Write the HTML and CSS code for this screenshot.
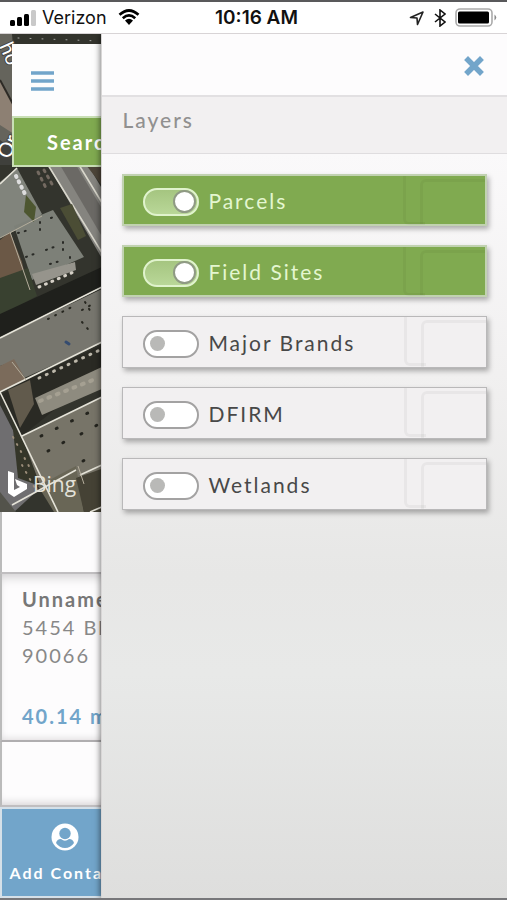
FILE: index.html
```html
<!DOCTYPE html>
<html lang="en">
  <head>
    <meta charset="utf-8" />
    <meta name="viewport" content="width=device-width, initial-scale=1" />
    <title>Layers</title>
    <link rel="stylesheet" href="styles.css">
  </head>
  <body>
    <div class="status">
      <div class="status-left">
        <svg width="28" height="18" viewBox="0 0 28 18">
          <rect x="0" y="11" width="5" height="6" rx="1.5" />
          <rect x="7" y="8" width="5" height="9" rx="1.5" />
          <rect x="14" y="5" width="5" height="12" rx="1.5" />
          <rect x="21" y="1" width="5" height="16" rx="1.5" fill="#c9c9c9" />
        </svg>
        <span class="carrier">Verizon</span>
        <svg class="wifi" width="22" height="17" viewBox="0 0 22 17">
          <path d="M1.5 5.8Q11-2.8 20.5 5.8M4.8 9.2Q11 3.7 17.2 9.2" fill="none" stroke="#000" stroke-width="2.7" />
          <path d="M7 11.5Q11 8.2 15 11.5L11 16Z" />
        </svg>
      </div>
      <span class="time">10:16 AM</span>
      <div class="status-right">
        <svg width="16" height="16" viewBox="0 0 16 16">
          <path d="M1.5 7.5L14 2L8.5 14.5L8 8Z" fill="none" stroke="#222" stroke-width="1.6" stroke-linejoin="round" />
        </svg>
        <svg width="12" height="18" viewBox="0 0 12 18">
          <path d="M1 5L11 13L6 17V1L11 5L1 13" fill="none" stroke="#111" stroke-width="1.6" />
        </svg>
        <svg width="42" height="20" viewBox="0 0 42 20">
          <rect x="1" y="1" width="36" height="17" rx="4" fill="#fff" stroke="#aaa" stroke-width="1.6" />
          <rect x="3" y="3.500" width="31" height="12" rx="1.5" />
          <path d="M39.500 6.500Q43 9.500 39.500 12.500Z" fill="#888" />
        </svg>
      </div>
    </div>

    <div class="stage">
      <main class="page">
        <section class="map">
          <svg class="aerial" viewBox="0 34 507 478" preserveAspectRatio="xMinYMin slice">
            <rect y="34" width="507" height="478" fill="#33342d" />
            <!-- streets -->
            <path d="M0 34H12L14 60V165H0Z" fill="#65645c" />
            <path d="M0 80L14 105V134L0 125Z" fill="#8d8073" />
            <path d="M0 140L14 150V165H0Z" fill="#3f403c" />
            <path d="M0 80L14 106" stroke="#2d2a25" stroke-width="2" />
            <path d="M48 165H88L104 192V262Z" fill="#85847f" />
            <path d="M60 165H76L104 212V240Z" fill="#6b6965" />
            <path d="M86 165H104V188Z" fill="#4d4539" />
            <path d="M48 165L104 256M79 165L104 206" stroke="#d8d6cb" stroke-width="1.6" />
            <!-- roofs -->
            <path d="M0 182L17 168L42 214L33 222L0 238Z" fill="#81847c" />
            <path d="M14 226L53 210L84 257L32 280Z" fill="#7d8078" />
            <path d="M0 240L10 232L22 262L28 290L0 286Z" fill="#6b5846" />
            <path d="M26 195L36 207L34 222L24 212Z" fill="#4d5630" />
            <path d="M60 208L72 204L86 236L78 240Z" fill="#4b4d35" />
            <path d="M0 278L28 268L37 296L0 316Z" fill="#394130" />
            <path d="M0 314L104 266V288L0 338Z" fill="#1f201c" />
            <path d="M32 274L75 262L76 270L36 285Z" fill="#96948c" />
            <path d="M0 338L104 288V342L24 378L12 362L0 366Z" fill="#77766e" />
            <path d="M0 366L14 359L26 380L0 391Z" fill="#7b6b5b" />
            <path d="M27 380L104 344V370L22 436L2 394Z" fill="#2a2a24" />
            <path d="M8 390L30 380L34 404L20 428Z" fill="#615a4c" />
            <path d="M35 398L104 366V388L42 415Z" fill="#8e8b7f" />
            <path d="M22 436L104 396V472L76 478L40 485Z" fill="#777468" />
            <path d="M0 405L18 440L38 490L14 512H0Z" fill="#6f6e70" />
            <path d="M12 420L24 444L40 486L18 478Z" fill="#353629" />
            <path d="M38 486L76 466L84 512H54Z" fill="#696656" />
            <path d="M76 478L104 468V512H84Z" fill="#454235" />
            <path d="M0 492L16 512H0Z" fill="#53534b" />
            <!-- parcel lines -->
            <path d="M0 184L17 168M0 338L104 286M0 392L104 341M22 436L104 396M0 392L58 512M12 505L76 470M80 475L104 464M90 512L104 506" fill="none" stroke="#e5e3d8" stroke-width="1.6" />
            <path d="M12 362L26 380M0 238L42 216M10 232L30 290M78 466L84 484" fill="none" stroke="#b4ad9c" />
            <!-- parked cars, vents and trees -->
            <g fill="none" stroke-linecap="round">
              <path d="M16 176L26 196" stroke="#ddd" stroke-width="4" stroke-dasharray="1 5" />
              <path d="M38 172L46 188M44 170L52 184" stroke="#746a61" stroke-width="3" stroke-dasharray="2 5" />
              <path d="M39 287L76 271" stroke="#d5d0c7" stroke-width="3" stroke-dasharray="1 6" />
              <path d="M39 378L100 350" stroke="#bcb7aa" stroke-width="3" stroke-dasharray="1 7" />
              <path d="M18 233L29 230M40 222V230M51 218L55 216M26 257L34 254M63 242V250M46 250L54 247M50 264L60 261M70 257V258" stroke="#292a26" stroke-width="2" stroke-dasharray="1 6" />
              <path d="M48 319L72 307M82 310L91 305M82 322L92 334M85 302L92 314" stroke="#26261f" stroke-width="2" stroke-dasharray="1 7" />
              <path d="M41 436L96 409M48 451L66 441M81 434L99 424M83 461L95 454" stroke="#24241e" stroke-width="3" stroke-dasharray="1 16" />
              <path d="M66 342L69 344" stroke="#354c70" stroke-width="3" />
              <path d="M13 437L30 468M22 465L36 490" stroke="#9a8c78" stroke-width="2" stroke-dasharray="1 7" />
              <path d="M40 401L98 378" stroke="#a5a092" stroke-width="4" stroke-dasharray="2 7" />
              <path d="M18 38L100 41" stroke="#a6a7a3" stroke-width="1" stroke-dasharray="1 11" />
            </g>
            <g class="street">
              <text transform="translate(-1 46) rotate(66)">ho</text>
              <text transform="translate(9 160) rotate(-64)">Or</text>
            </g>
          </svg>
          <div class="search">
            <div class="search-top">
              <button class="menu" aria-label="Menu">
                <svg width="23" height="20" viewBox="0 0 23 20">
                  <path d="M0 2H23M0 10H23M0 18H23" stroke="#72a5ca" stroke-width="3.500" />
                </svg>
              </button>
            </div>
            <button class="search-button">Search</button>
          </div>
          <div class="bing">
            <svg width="19" height="26" viewBox="0 0 19 26">
              <path d="M0 0L6 2V19L12 16L9 14L7 8L19 13V18L6 26L0 22Z" fill="#fff" />
            </svg>
            <span>Bing</span>
          </div>
        </section>
        <div class="strip"></div>
        <article class="site">
          <strong>Unnamed</strong>
          <span>5454 Bl</span>
          <span>90066</span>
          <b class="distance">40.14 m</b>
        </article>
        <div class="strip strip-bottom"></div>
        <nav class="actions">
          <button class="action">
            <svg width="28" height="28" viewBox="0 0 28 28">
              <circle cx="14" cy="14" r="13.500" fill="#fff" />
              <circle cx="14" cy="10.500" r="5.700" fill="#72a5ca" />
              <path d="M5 20Q6 16 10 16Q14 19.500 18 16Q22 16 23 20Q19.500 25 14 25Q8.500 25 5 20Z" fill="#72a5ca" />
            </svg>
            Add Contact
          </button>
        </nav>
      </main>

      <aside class="drawer">
        <div class="drawer-top">
          <button class="close" aria-label="Close">
            <svg width="20" height="20" viewBox="0 0 20 20">
              <path d="M4 4L16 16M16 4L4 16" stroke="#72a5ca" stroke-width="5.500" stroke-linecap="square" stroke-linejoin="round" />
            </svg>
          </button>
        </div>
        <h2 class="drawer-title">Layers</h2>
        <div class="layers">
          <label class="layer active"><input type="checkbox" class="toggle" checked />Parcels</label>
          <label class="layer active"><input type="checkbox" class="toggle" checked />Field Sites</label>
          <label class="layer"><input type="checkbox" class="toggle" />Major Brands</label>
          <label class="layer"><input type="checkbox" class="toggle" />DFIRM</label>
          <label class="layer"><input type="checkbox" class="toggle" />Wetlands</label>
        </div>
      </aside>
    </div>
  </body>
</html>
```
FILE: styles.css
```css
* {
  box-sizing: border-box;
}
html,
body {
  margin: 0;
  padding: 0;
}
body {
  min-height: 100vh;
  display: flex;
  flex-direction: column;
  border-bottom: 2px solid #77777a;
  font-family: Lato, "Liberation Sans", sans-serif;
  font-size: 21px;
  letter-spacing: 2px;
  color: #888;
}
button {
  font: inherit;
  letter-spacing: inherit;
  border: 0;
  padding: 0;
  background: none;
  cursor: pointer;
}
svg {
  display: block;
  flex-shrink: 0;
}

/* phone status bar */
.status {
  height: 34px;
  padding: 0 10px;
  border-top: 2px solid #59595b;
  border-bottom: 1px solid #d8d4d6;
  background: #fff;
  color: #111;
  display: grid;
  grid-template-columns: 1fr auto 1fr;
  align-items: center;
  font-family: Inter, sans-serif;
  font-size: 18px;
  letter-spacing: 0;
}
.status-left,
.status-right {
  display: flex;
  align-items: center;
}
.carrier {
  margin: 0 11px 0 4px;
}
.time {
  padding-left: 6px;
  font-size: 19px;
  font-weight: 600;
}
.status-right {
  justify-content: flex-end;
  gap: 9px;
}

.stage {
  flex: 1;
  display: flex;
  position: relative;
  overflow: hidden;
}
.page {
  flex: 1;
  display: flex;
  flex-direction: column;
  background: #fdfcfd;
}

/* map */
.map {
  flex: 1;
  position: relative;
  padding: 10px 12px;
  display: flex;
  flex-direction: column;
  justify-content: space-between;
  overflow: hidden;
}
.aerial {
  position: absolute;
  top: 0;
  left: 0;
  width: 100%;
  height: 100%;
}
.street {
  fill: #fff;
  stroke: #444;
  stroke-width: 2px;
  paint-order: stroke;
  font-size: 20px;
  letter-spacing: 0;
}
.search {
  position: relative;
}
.search-top {
  height: 72px;
  padding: 26px 19px;
  background: #fdfdfd;
}
.search-button {
  width: 100%;
  height: 51px;
  padding-left: 33px;
  border: 2px solid #c9dfb6;
  background: #80aa50;
  color: #fff;
  font-size: 20px;
  font-weight: 700;
  text-align: left;
}
.bing {
  position: relative;
  display: flex;
  align-items: center;
  gap: 6px;
  margin-left: -4px;
  padding-bottom: 4px;
  color: #e4e2da;
  font-family: "Open Sans", sans-serif;
  letter-spacing: 0;
}

/* selected site */
.strip {
  height: 62px;
  border-left: 2px solid #bbb;
  border-bottom: 2px solid #c0bec0;
}
.strip-bottom {
  height: 65px;
  box-shadow: inset 0 -8px 8px -6px #d5d2d4;
}
.site {
  height: 168px;
  padding: 11px 20px;
  border-left: 2px solid #bbb;
  border-bottom: 2px solid #b0aeb0;
  box-shadow: inset 0 8px 12px -6px #c8c6c8, inset 0 -6px 8px -6px #d5d2d4;
  font-size: 20px;
  line-height: 28px;
  display: flex;
  flex-direction: column;
}
.site strong {
  color: #777;
}
.distance {
  margin-top: 33px;
  color: #72a5ca;
}
.actions {
  height: 91px;
  border: 2px solid #d5e0e8;
  border-right: 0;
  background: #72a5ca;
  display: flex;
}
.action {
  width: 25%;
  color: #fff;
  font-size: 16px;
  font-weight: 700;
  white-space: nowrap;
  display: flex;
  flex-direction: column;
  align-items: center;
  justify-content: center;
  gap: 12px;
}

/* layers drawer, slides over the page */
.drawer {
  position: absolute;
  top: 0;
  right: 0;
  bottom: 0;
  width: 80%;
  border-left: 1px solid #d8d6d6;
  background: linear-gradient(#faf9fa 120px, #f1f0f0 340px, #e7e7e6 540px, #e8e9e8 640px, #dededd);
  box-shadow: -1px 0 6px rgba(0, 0, 0, 0.5);
}
.drawer-top {
  height: 63px;
  padding: 2px 23px 0;
  border-bottom: 2px solid #e2e0e2;
  background: #fdfcfd;
  display: flex;
  justify-content: flex-end;
  align-items: center;
}
.drawer-title {
  height: 57px;
  margin: 0;
  padding: 9px 20px;
  border-bottom: 1px solid #dfdddf;
  background: #f2f0f1;
  color: #919090;
  font-size: 21px;
  font-weight: 500;
  line-height: 28px;
}
.layers {
  padding: 20px;
  display: flex;
  flex-direction: column;
  gap: 19px;
}
.layer {
  position: relative;
  height: 52px;
  padding-left: 20px;
  border: 1px solid #b9b8b9;
  background: #f2f0f1;
  box-shadow: 2px 3px 5px rgba(0, 0, 0, 0.3);
  color: #484848;
  display: flex;
  align-items: center;
  gap: 9px;
}
.layer::before,
.layer::after {
  content: "";
  position: absolute;
  top: 0;
  right: 60px;
  width: 19px;
  height: 46px;
  border: 3px solid rgba(0, 0, 0, 0.04);
  border-top: 0;
  border-right: 0;
  border-radius: 0 0 0 6px;
}
.layer::after {
  top: 3px;
  right: 0;
  bottom: 0;
  width: 62px;
  height: auto;
  border-top: 3px solid rgba(0, 0, 0, 0.04);
  border-bottom: 0;
  border-radius: 6px 0 0 0;
}
.active {
  padding-left: 19px;
  border: 2px solid #c1d2b1;
  background: #80aa50;
  color: #e4f6d0;
}
.toggle {
  appearance: none;
  flex-shrink: 0;
  width: 56px;
  height: 28px;
  margin: 3px 0 0;
  padding: 0 5px;
  border: 2px solid #a3a2a2;
  border-radius: 14px;
  background: #fff;
  display: flex;
  align-items: center;
}
.toggle::before {
  content: "";
  width: 15px;
  height: 15px;
  border-radius: 50%;
  background: #b9b9b7;
}
.toggle:checked {
  padding: 0 1px;
  border-color: #e0f3cd;
  background: linear-gradient(#a5c580, #b9d798);
  justify-content: flex-end;
}
.toggle:checked::before {
  width: 19px;
  height: 19px;
  border: 2px solid #8f9a84;
  background: #fff;
}
```
